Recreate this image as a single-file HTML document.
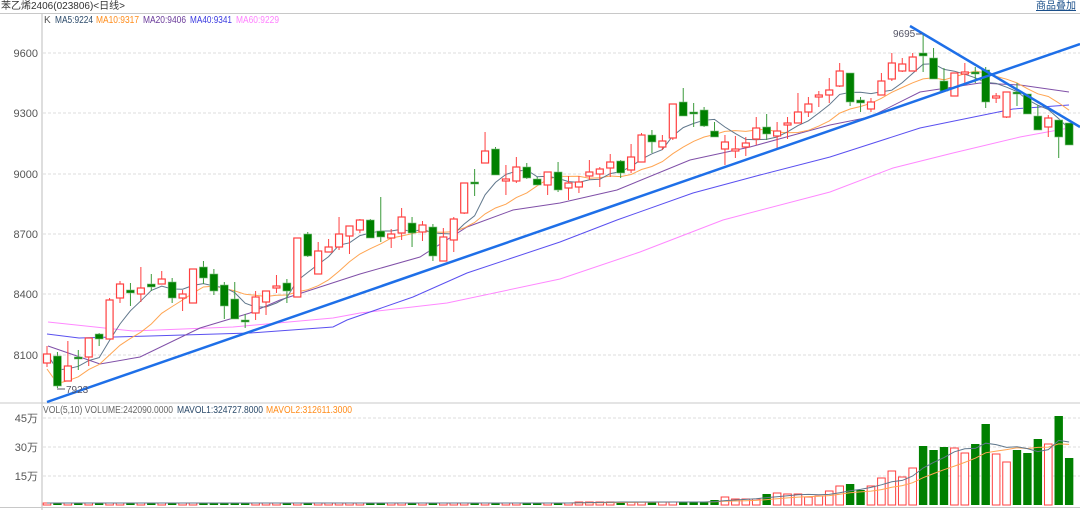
<!DOCTYPE html>
<html><head><meta charset="utf-8"><style>
html,body{margin:0;padding:0;background:#fff;width:1080px;height:510px;overflow:hidden;font-family:"Liberation Sans","Noto Sans CJK SC",sans-serif}
#top{position:absolute;left:0;top:0;width:1080px;height:13px;border-bottom:1px solid #c8c8c8;font-size:10px;color:#333;line-height:13px}
#top .t{position:absolute;left:1px;top:0}
#top .r{position:absolute;left:1036px;top:0;color:#1a4f8a;text-decoration:underline}
svg{position:absolute;left:0;top:0}
</style></head><body>
<div id="top"><span class="t">苯乙烯2406(023806)&lt;日线&gt;</span><span class="r">商品叠加</span></div>
<svg id="s" width="1080" height="510" xmlns="http://www.w3.org/2000/svg" font-family="Liberation Sans, Noto Sans CJK SC, sans-serif">
<line x1="42" y1="14" x2="42" y2="510" stroke="#bdbdbd"/>
<line x1="0" y1="403" x2="1080" y2="403" stroke="#c8c8c8"/>
<line x1="0" y1="507.5" x2="1080" y2="507.5" stroke="#c8c8c8"/>
<g stroke="#dedede" stroke-dasharray="3,2">
<line x1="43" y1="53" x2="1080" y2="53"/><line x1="43" y1="113" x2="1080" y2="113"/><line x1="43" y1="174" x2="1080" y2="174"/><line x1="43" y1="234" x2="1080" y2="234"/><line x1="43" y1="294" x2="1080" y2="294"/><line x1="43" y1="355" x2="1080" y2="355"/>
<line x1="43" y1="418" x2="1080" y2="418"/><line x1="43" y1="447" x2="1080" y2="447"/><line x1="43" y1="476" x2="1080" y2="476"/>
</g>
<g font-size="11" fill="#555" text-anchor="end">
<text x="38" y="57">9600</text><text x="38" y="117">9300</text><text x="38" y="178">9000</text><text x="38" y="238">8700</text><text x="38" y="298">8400</text><text x="38" y="359">8100</text>
<text x="38" y="422">45万</text><text x="38" y="451">30万</text><text x="38" y="480">15万</text>
</g>
<g font-size="10">
<text x="44" y="23" fill="#555">K</text>
<text x="55" y="23" fill="#2b4a6a" textLength="38" lengthAdjust="spacingAndGlyphs">MA5:9224</text>
<text x="96" y="23" fill="#ff8c1a" textLength="43" lengthAdjust="spacingAndGlyphs">MA10:9317</text>
<text x="143" y="23" fill="#6a3a9a" textLength="43" lengthAdjust="spacingAndGlyphs">MA20:9406</text>
<text x="190" y="23" fill="#3a3ae0" textLength="42" lengthAdjust="spacingAndGlyphs">MA40:9341</text>
<text x="236" y="23" fill="#ff80ff" textLength="43" lengthAdjust="spacingAndGlyphs">MA60:9229</text>
<text x="43" y="413" fill="#666" textLength="130" lengthAdjust="spacingAndGlyphs">VOL(5,10) VOLUME:242090.0000</text>
<text x="177" y="413" fill="#2b4a6a" textLength="86" lengthAdjust="spacingAndGlyphs">MAVOL1:324727.8000</text>
<text x="266" y="413" fill="#ff8c1a" textLength="86" lengthAdjust="spacingAndGlyphs">MAVOL2:312611.3000</text>
</g>
<g id="g"></g>
<text x="893" y="37" font-size="10" fill="#556">9695</text><line x1="916" y1="34" x2="922" y2="34" stroke="#556"/>
<text x="66" y="393" font-size="10" fill="#556">7923</text><line x1="57" y1="389" x2="65" y2="389" stroke="#556"/>
</svg>
<script>
(function(){
var D=[[363,354,346,367],[356,386,352,388],[381,366,341,381],[357,359,350,370],[357,338,338,366],[334,339,333,346],[339,300,298,339],[298,284,281,303],[290,293,283,306],[294,288,267,302],[284,287,274,291],[284,279,271,284],[282,298,278,303],[298,294,290,311],[303,269,269,303],[267,278,261,284],[274,291,269,295],[285,306,282,319],[299,319,282,319],[320,322,314,328],[313,297,291,320],[302,291,291,315],[288,286,275,293],[283,291,279,303],[297,238,238,297],[234,256,232,257],[274,251,242,274],[252,247,239,252],[247,234,217,250],[236,226,226,254],[230,220,219,233],[220,238,219,238],[231,237,197,242],[238,234,229,248],[233,217,208,240],[223,233,217,247],[232,225,221,241],[227,256,224,261],[261,237,228,261],[240,219,217,252],[213,183,183,214],[182,184,169,196],[163,151,132,163],[149,175,147,175],[181,179,165,195],[181,167,157,183],[167,178,163,179],[179,185,177,185],[185,172,172,195],[172,190,162,192],[188,183,176,200],[187,182,176,193],[176,172,160,180],[174,169,167,187],[168,162,154,177],[161,173,160,178],[170,157,144,173],[162,135,133,162],[135,142,130,153],[147,141,135,150],[138,104,104,140],[102,116,88,116],[112,114,103,127],[110,126,107,127],[131,137,122,137],[149,142,135,165],[151,149,136,158],[147,143,137,156],[139,128,117,145],[127,134,114,140],[136,131,122,148],[125,123,117,139],[123,112,93,123],[112,104,97,117],[97,95,91,107],[95,90,78,103],[86,71,63,87],[73,102,73,106],[100,103,97,112],[109,102,98,112],[95,81,73,95],[79,63,53,81],[71,64,58,72],[71,57,53,71],[53,56,33,72],[58,79,48,79],[81,91,68,91],[96,73,73,96],[74,72,63,83],[72,74,67,83],[70,102,67,108],[98,96,93,103],[117,92,92,118],[92,94,83,106],[94,114,94,114],[116,130,105,130],[127,118,115,137],[120,137,120,158],[123,145,123,145]];
var V={63:502,64:500,65:497,66:499,67:499,68:499,69:494,70:493,71:494,72:494,73:497,74:496,75:491,76:486,77:484,78:490,79:486,80:478,81:471,82:477,83:468,84:446,85:450,86:447,87:448,88:453,89:444,90:424,91:454,92:462,93:450,94:453,95:439,96:444,97:416,98:458};
var h='',X=function(i){return 47+i*10.43};
function pl(pts,c,w){return '<polyline fill="none" stroke="'+c+'" stroke-width="'+(w||1)+'" points="'+pts+'"/>';}
h+=pl('48,322 133,331 233,327 333,318 360,313 447,303 560,279 640,252 723,220 830,192 893,168 953,153 1020,137 1069,128','#ff88ff');
h+=pl('47,334 79,338 150,336 250,333 333,327 347,320 413,297 467,273 560,242 617,220 693,193 760,175 830,157 920,128 1013,109 1069,105','#5a50f0');
h+=pl('48,346 100,364 140,357 200,328 250,313 280,300 360,274 420,257 467,227 513,210 560,203 617,190 690,160 750,147 830,125 870,117 920,92 980,83 1020,85 1069,92','#8050a8');
var m5=[],m10=[],vols=[],i,j,a,n;
for(i=0;i<D.length;i++){a=0;n=0;for(j=Math.max(0,i-4);j<=i;j++){a+=D[j][1];n++}m5.push(X(i).toFixed(1)+','+(a/n).toFixed(1));a=0;n=0;for(j=Math.max(0,i-9);j<=i;j++){a+=D[j][1];n++}m10.push(X(i).toFixed(1)+','+(a/n+(i<10?(10-i)*1.5:0)).toFixed(1));}
h+=pl(m10.join(' '),'#ffa552');h+=pl(m5.join(' '),'#60778c');
for(i=0;i<D.length;i++){var d=D[i],x=X(i),up=d[1]<=d[0];
var ty=Math.min(d[0],d[1]),bh=Math.max(1.5,Math.abs(d[0]-d[1]));
if(up){h+='<line x1="'+x+'" y1="'+d[2]+'" x2="'+x+'" y2="'+d[3]+'" stroke="#ff4040"/>';h+='<rect x="'+(x-3.5)+'" y="'+ty+'" width="7" height="'+bh+'" fill="#fff" stroke="#ff4040" stroke-width="1.2"/>';}
else{h+='<line x1="'+x+'" y1="'+d[2]+'" x2="'+x+'" y2="'+d[3]+'" stroke="#3a9a3a"/>';h+='<rect x="'+(x-4)+'" y="'+ty+'" width="8" height="'+bh+'" fill="#008000" stroke="#7fbf7f" stroke-width="0.6"/>';}
var vt=V[i]||(i>50?502:503);vols.push(vt);
if(up)h+='<rect x="'+(x-3.8)+'" y="'+vt+'" width="7.6" height="'+(505-vt)+'" fill="#fff" stroke="#ff4040" stroke-width="1"/>';
else h+='<rect x="'+(x-4.2)+'" y="'+vt+'" width="8.4" height="'+(505-vt)+'" fill="#008000"/>';}
var v1=[],v2=[];
for(i=0;i<vols.length;i++){a=0;n=0;for(j=Math.max(0,i-4);j<=i;j++){a+=vols[j];n++}v1.push(X(i).toFixed(1)+','+(a/n).toFixed(1));a=0;n=0;for(j=Math.max(0,i-9);j<=i;j++){a+=vols[j];n++}v2.push(X(i).toFixed(1)+','+(a/n).toFixed(1));}
h+=pl(v2.join(' '),'#ffa552');h+=pl(v1.join(' '),'#60778c');
h+='<line x1="47" y1="402" x2="1080" y2="44" stroke="#1e6fe8" stroke-width="2.5"/>';
h+='<line x1="910" y1="26" x2="1080" y2="127" stroke="#1e6fe8" stroke-width="2.5"/>';
document.getElementById('g').innerHTML=h;
})();
</script>
</body></html>
